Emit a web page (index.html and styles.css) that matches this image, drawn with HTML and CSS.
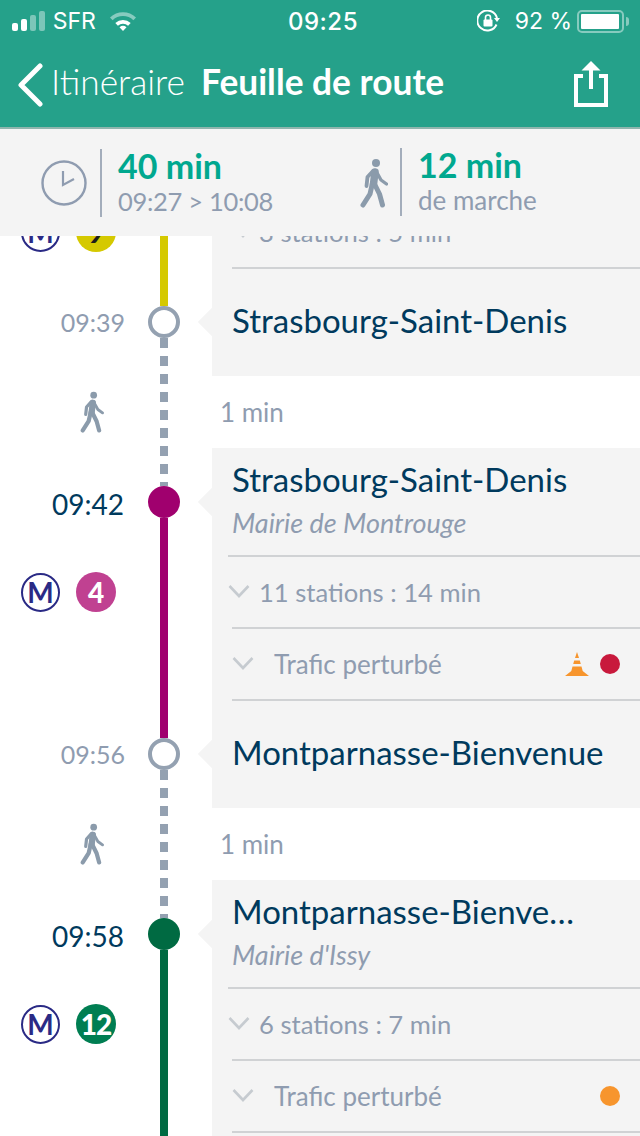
FILE: index.html
```html
<!DOCTYPE html>
<html lang="fr">
<head>
    <meta charset="UTF-8">
    <meta name="viewport" content="width=device-width, initial-scale=1.0">
    <title>Feuille de route</title>
    <link rel="stylesheet" href="styles.css">
</head>
<body>
    <svg class="defs" width="0" height="0">
        <symbol id="walker" viewBox="0 0 28 50">
            <circle cx="16" cy="5" r="4" fill="currentColor"/>
            <g fill="none" stroke="currentColor" stroke-linecap="round" stroke-linejoin="round">
                <path d="M15 14 13.500 26" stroke-width="7.500"/>
                <path d="M12.500 25 10 36 3 47" stroke-width="5"/>
                <path d="M14 25 19.500 36 22.500 47" stroke-width="5"/>
                <path d="M13 13 7.500 19 6.500 28" stroke-width="3.800"/>
                <path d="M16 13 21 22 26.500 26" stroke-width="3.400"/>
            </g>
        </symbol>
        <symbol id="chevron" viewBox="0 0 22 14">
            <path d="M1.500 2 11 12 20.500 2" fill="none" stroke="#c6cbd0" stroke-width="2.600"/>
        </symbol>
    </svg>

    <div class="page">
        <header class="header">
            <div class="status">
                <div class="status-left">
                    <span class="signal"><i></i><i></i><i class="off"></i><i class="off"></i></span>
                    <span>SFR</span>
                    <svg class="wifi" width="28" height="22" viewBox="0 0 28 22">
                        <path d="M1 7.500a19 19 0 0 1 26 0l-2.600 2.800a15 15 0 0 0-20.800 0z" fill="#fff" opacity=".45"/>
                        <path d="M6.300 13a11.500 11.500 0 0 1 15.400 0l-2.600 2.800a7.500 7.500 0 0 0-10.200 0z" fill="#fff"/>
                        <path d="M10.500 17.300a5.500 5.500 0 0 1 7 0L14 21z" fill="#fff"/>
                    </svg>
                </div>
                <div class="clock-time">09:25</div>
                <div class="status-right">
                    <svg width="24" height="22" viewBox="0 0 24 22">
                        <path d="M19.500 14.500A10 10 0 1 1 20 8" fill="none" stroke="#fff" stroke-width="2"/>
                        <path d="M17 8h6l-3 4z" fill="#fff"/>
                        <rect x="6.500" y="9.500" width="9" height="7" rx="1" fill="#fff"/>
                        <path d="M8.500 10V7.500a2.500 2.500 0 0 1 5 0V10" fill="none" stroke="#fff" stroke-width="1.600"/>
                    </svg>
                    <span class="percent">92 %</span>
                    <span class="battery"><i></i></span>
                </div>
            </div>
            <nav class="nav">
                <svg class="back" width="26" height="44" viewBox="0 0 26 44">
                    <path d="M23 3 4 22l19 19" fill="none" stroke="#fff" stroke-width="5" stroke-linecap="round" stroke-linejoin="round"/>
                </svg>
                <span class="back-label">Itinéraire</span>
                <span class="nav-title">Feuille de route</span>
                <svg class="share" width="34" height="47" viewBox="0 0 34 47">
                    <path d="M9 16H2v29h30V16h-7" fill="none" stroke="#fff" stroke-width="4"/>
                    <path d="M17 29V8" stroke="#fff" stroke-width="4"/>
                    <path d="M17 1l9.500 9.500h-19z" fill="#fff"/>
                </svg>
            </nav>
        </header>

        <section class="summary">
            <div class="stat stat-time">
                <svg class="clock" width="46" height="46" viewBox="0 0 46 46">
                    <circle cx="23" cy="23" r="21.500" fill="none" stroke="#8f9cb0" stroke-width="2.400"/>
                    <path d="M22 11v14l11-6" fill="none" stroke="#8f9cb0" stroke-width="2.200"/>
                </svg>
                <div class="stat-text">
                    <strong>40 min</strong>
                    <span class="range">09:27 &gt; 10:08</span>
                </div>
            </div>
            <div class="stat stat-walk">
                <svg class="walker-big" width="28" height="50"><use href="#walker"/></svg>
                <div class="stat-text">
                    <strong>12 min</strong>
                    <span>de marche</span>
                </div>
            </div>
        </section>

        <main class="timeline">
            <div class="row">
                <div class="when">
                    <div class="lines"><span class="metro">M</span><span class="badge l9">9</span></div>
                </div>
                <div class="rail"><div class="seg l9-bg"></div></div>
                <div class="card"><div class="cell cell-stations first"><svg class="chev"><use href="#chevron"/></svg><span>3 stations : 5 min</span></div></div>
            </div>

            <div class="row stop">
                <div class="when"><span class="time past">09:39</span></div>
                <div class="rail">
                    <div class="seg fixed l9-bg"></div>
                    <div class="node hollow"></div>
                    <div class="seg dash"></div>
                </div>
                <div class="card notch"><h2 class="name">Strasbourg-Saint-Denis</h2></div>
            </div>

            <div class="row walk">
                <div class="when"><svg class="walker-small" width="24" height="42"><use href="#walker"/></svg></div>
                <div class="rail"><div class="seg dash shifted"></div></div>
                <div class="walk-time">1 min</div>
            </div>

            <div class="row depart">
                <div class="when"><span class="time">09:42</span></div>
                <div class="rail">
                    <div class="seg fixed dash shifted"></div>
                    <div class="node l4-bg"></div>
                    <div class="seg l4-bg"></div>
                </div>
                <div class="card notch">
                    <div class="cell cell-head">
                        <h2 class="name cut">Strasbourg-Saint-Denis</h2>
                        <p class="direction">Mairie de Montrouge</p>
                    </div>
                </div>
            </div>
            <div class="row">
                <div class="when">
                    <div class="lines"><span class="metro">M</span><span class="badge l4">4</span></div>
                </div>
                <div class="rail"><div class="seg l4-bg"></div></div>
                <div class="card"><div class="cell cell-stations"><svg class="chev"><use href="#chevron"/></svg><span>11 stations : 14 min</span></div></div>
            </div>
            <div class="row">
                <div class="when"></div>
                <div class="rail"><div class="seg l4-bg"></div></div>
                <div class="card">
                    <div class="cell cell-traffic">
                        <svg class="chev"><use href="#chevron"/></svg>
                        <span>Trafic perturbé</span>
                        <div class="alerts">
                            <svg width="24" height="24" viewBox="0 0 24 24">
                                <path d="M12 0 14 6H10zM9.200 8.500h5.600l1 3.500H8.200zM7.500 14.500h9l1.200 4.500 6.300 5H0l6.300-5z" fill="#f7952d"/>
                            </svg>
                            <i class="dot red"></i>
                        </div>
                    </div>
                </div>
            </div>

            <div class="row stop">
                <div class="when"><span class="time past">09:56</span></div>
                <div class="rail">
                    <div class="seg fixed l4-bg"></div>
                    <div class="node hollow"></div>
                    <div class="seg dash"></div>
                </div>
                <div class="card notch"><h2 class="name">Montparnasse-Bienvenue</h2></div>
            </div>

            <div class="row walk">
                <div class="when"><svg class="walker-small" width="24" height="42"><use href="#walker"/></svg></div>
                <div class="rail"><div class="seg dash shifted"></div></div>
                <div class="walk-time">1 min</div>
            </div>

            <div class="row depart">
                <div class="when"><span class="time">09:58</span></div>
                <div class="rail">
                    <div class="seg fixed dash shifted"></div>
                    <div class="node l12-dark"></div>
                    <div class="seg l12-dark"></div>
                </div>
                <div class="card notch">
                    <div class="cell cell-head">
                        <h2 class="name cut">Montparnasse-Bienvenue</h2>
                        <p class="direction">Mairie d'Issy</p>
                    </div>
                </div>
            </div>
            <div class="row">
                <div class="when">
                    <div class="lines"><span class="metro">M</span><span class="badge l12">12</span></div>
                </div>
                <div class="rail"><div class="seg l12-dark"></div></div>
                <div class="card"><div class="cell cell-stations"><svg class="chev"><use href="#chevron"/></svg><span>6 stations : 7 min</span></div></div>
            </div>
            <div class="row">
                <div class="when"></div>
                <div class="rail"><div class="seg l12-dark"></div></div>
                <div class="card">
                    <div class="cell cell-traffic">
                        <svg class="chev"><use href="#chevron"/></svg>
                        <span>Trafic perturbé</span>
                        <div class="alerts"><i class="dot orange"></i></div>
                    </div>
                </div>
            </div>
            <div class="row">
                <div class="when"></div>
                <div class="rail"><div class="seg l12-dark"></div></div>
                <div class="card"></div>
            </div>
        </main>
    </div>
</body>
</html>
```

FILE: styles.css
```css
* {
    margin: 0;
    padding: 0;
    box-sizing: border-box;
}

body {
    font-family: Lato, 'Noto Sans', sans-serif;
    background: #fff;
    color: #003a5d;
}

.defs {
    position: absolute;
}

.page {
    width: 640px;
    height: 1136px;
    display: flex;
    flex-direction: column;
    overflow: hidden;
}

/* Header */
.header {
    background: #25a18a;
    border-bottom: 2px solid #8fb5ad;
    color: #fff;
    height: 129px;
    flex: none;
}

.status {
    height: 42px;
    padding: 0 11px 0 12px;
    display: grid;
    grid-template-columns: 1fr auto 1fr;
    align-items: center;
    font-family: Inter, Roboto, sans-serif;
    font-size: 23px;
}

.status-left,
.status-right {
    display: flex;
    align-items: center;
}

.status-left {
    gap: 8px;
}

.status-right {
    justify-content: flex-end;
}

.signal {
    display: flex;
    align-items: flex-end;
    gap: 3.600px;
    height: 20px;
}

.signal i {
    width: 5.500px;
    background: #fff;
    border-radius: 2px;
}

.signal i:nth-child(1) { height: 8px; }
.signal i:nth-child(2) { height: 12px; }
.signal i:nth-child(3) { height: 16px; }
.signal i:nth-child(4) { height: 20px; }

.signal i.off {
    opacity: .4;
}

.wifi {
    margin-left: 5px;
}

.clock-time {
    font-weight: 500;
    font-size: 24px;
    letter-spacing: .5px;
    margin-left: 5px;
}

.percent {
    margin: 0 5px 0 14px;
}

.battery {
    width: 47px;
    height: 23px;
    border: 2px solid rgba(255, 255, 255, .45);
    border-radius: 5px;
    padding: 2px;
    position: relative;
    margin-right: 5px;
}

.battery i {
    display: block;
    width: 38px;
    height: 15px;
    background: #fff;
    border-radius: 1px;
}

.battery:after {
    content: '';
    position: absolute;
    right: -7px;
    top: 5px;
    width: 3px;
    height: 9px;
    background: rgba(255, 255, 255, .45);
    border-radius: 0 3px 3px 0;
}

.nav {
    height: 85px;
    padding: 0 32px 0 17px;
    display: flex;
    align-items: center;
    font-size: 35.300px;
}

.back {
    margin-right: 8px;
}

.back-label {
    font-weight: 300;
    margin-bottom: 6px;
}

.nav-title {
    font-weight: 700;
    margin: 0 0 6px 16px;
}

.share {
    margin-left: auto;
    margin-bottom: 2px;
}

/* Summary band */
.summary {
    height: 107px;
    flex: none;
    background: #f4f4f4;
    display: flex;
    z-index: 1;
}

.stat {
    display: flex;
    align-items: center;
}

.stat-time {
    width: 360px;
    padding-left: 41px;
}

.stat-text {
    display: flex;
    flex-direction: column;
    border-left: 2px solid #a3adbb;
    height: 68px;
    padding-left: 16px;
    justify-content: center;
    margin-left: 13px;
}

.stat-time .stat-text {
    margin-top: 1px;
}

.stat-walk .stat-text {
    margin: -2px 0 0 12px;
}

.stat-text strong {
    font-size: 34px;
    line-height: 36px;
    color: #00a88f;
}

.stat-text span {
    font-size: 26px;
    line-height: 34px;
    color: #8f9cb0;
}

.stat-text .range {
    font-size: 25.500px;
    letter-spacing: -.3px;
}

.walker-big,
.walker-small {
    color: #8b9bab;
    display: block;
}

/* Timeline */
.timeline {
    flex: 1;
    min-height: 0;
    overflow: hidden;
}

.row {
    display: grid;
    grid-template-columns: 148px 32px 1fr;
    height: 72px;
}

.row:first-child {
    margin-top: -40px;
}

.stop,
.depart {
    height: 108px;
}

.when {
    padding-right: 24px;
    text-align: right;
}

.depart .when {
    padding-top: 36px;
}

.stop .when {
    padding: 34px 23px 0 0;
}

.time {
    font-size: 28px;
    line-height: 40px;
}

.time.past {
    font-size: 25px;
    color: #8f9cb0;
}

.lines {
    height: 100%;
    padding-left: 21px;
    display: flex;
    align-items: center;
    gap: 16px;
}

.metro {
    width: 39px;
    height: 39px;
    border: 2.500px solid #2a2a85;
    border-radius: 50%;
    color: #2a2a85;
    font-size: 28px;
    font-weight: 700;
    line-height: 34px;
    text-align: center;
}

.badge {
    width: 40px;
    height: 40px;
    border-radius: 50%;
    color: #fff;
    font-size: 28px;
    font-weight: 900;
    line-height: 40px;
    text-align: center;
}

.l9 { background: #d5c900; color: #1d1d1b; }
.l4 { background: #c04191; }
.l12 { background: #007e52; letter-spacing: -1px; }

.walk .when {
    padding: 15px 0 0 80px;
}

.rail {
    display: flex;
    flex-direction: column;
    align-items: center;
}

.seg {
    width: 8px;
    flex: 1;
}

.seg.fixed {
    flex: none;
    height: 38px;
}

.dash {
    background: linear-gradient(#94a1b1 10px, transparent 10px) 0 0 / 8px 18px;
}

.dash.shifted {
    background-position: 0 -2px;
}

.node {
    width: 32px;
    height: 32px;
    border-radius: 50%;
    flex: none;
}

.node.hollow {
    background: #fff;
    border: 4px solid #94a1b1;
}

.l9-bg { background-color: #d5c900; }
.l4-bg { background-color: #a0006e; }
.l12-dark { background-color: #006a42; }

.card {
    margin-left: 32px;
    background: #f4f4f4;
    position: relative;
    min-width: 0;
}

.notch:before {
    content: '';
    position: absolute;
    left: -10px;
    top: 44px;
    width: 20px;
    height: 20px;
    background: #f4f4f4;
    transform: rotate(45deg);
}

.name {
    font-size: 33px;
    font-weight: 400;
    line-height: 40px;
    white-space: nowrap;
    color: #003a5d;
}

.stop .name {
    padding: 32px 0 0 20px;
}

.cut {
    overflow: hidden;
    text-overflow: ellipsis;
    width: 352px;
}

/* divider sits across the row boundary, so 1px past the bottom */
.cell {
    height: calc(100% + 1px);
    position: relative;
    z-index: 1;
    border-bottom: 2px solid #d0d2d4;
    color: #8f9cb0;
    font-size: 26px;
}

.cell-head {
    margin-left: 16px;
    padding: 11px 0 0 4px;
}

.direction {
    font-size: 27px;
    font-style: italic;
    line-height: 47px;
}

.cell-stations,
.cell-traffic {
    display: flex;
    align-items: center;
    margin-left: 20px;
    padding-top: 1px;
}

.cell-stations {
    font-size: 25.600px;
}

.chev {
    width: 22px;
    height: 14px;
    flex: none;
    margin-top: -2px;
}

.cell-stations .chev {
    margin: -2px 9px 0 -4px;
}

.first .chev {
    margin-left: 0;
    margin-right: 5px;
}

.cell-traffic .chev {
    margin-right: 20px;
}

.alerts {
    margin-left: auto;
    padding-right: 20px;
    display: flex;
    align-items: center;
    gap: 11px;
}

.dot {
    width: 20px;
    height: 20px;
    border-radius: 50%;
}

.red { background: #c8193c; }
.orange { background: #f7952d; }

.walk-time {
    margin-left: 40px;
    color: #8f9cb0;
    font-size: 26px;
    line-height: 72px;
}
```
